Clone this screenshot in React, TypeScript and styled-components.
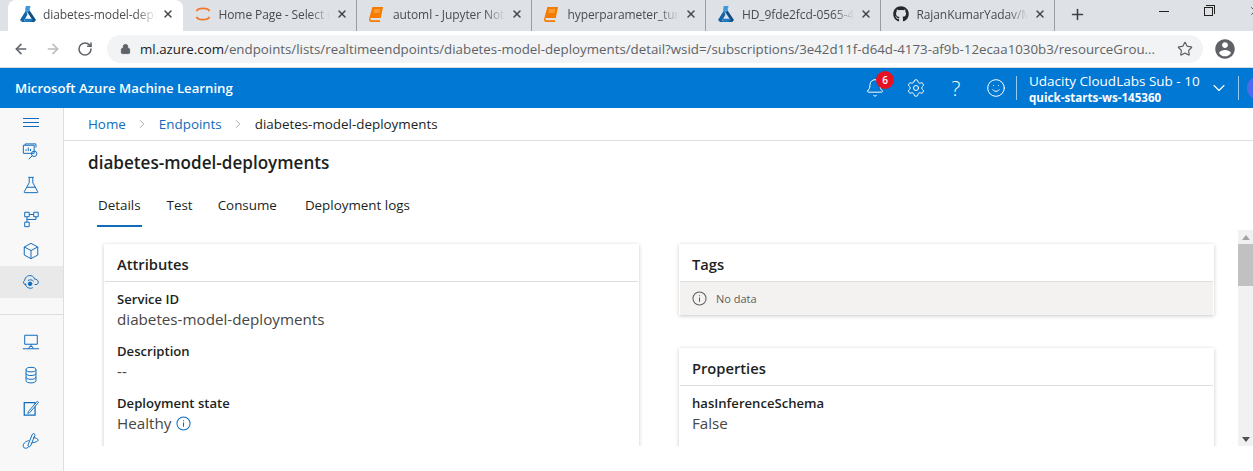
import { ReactNode } from 'react'
import styled, { createGlobalStyle } from 'styled-components'
import { FaGithub } from 'react-icons/fa'
import { IoMdContact } from 'react-icons/io'
import {
  ArrowLeft,
  ArrowRight,
  RotateCw,
  Lock,
  Star,
  X,
  Plus,
  Bell,
  Settings,
  Smile,
  ChevronDown,
  ChevronRight,
} from 'lucide-react'

const font = '"Open Sans", "Noto Sans", "Liberation Sans", sans-serif'

const GlobalStyle = createGlobalStyle`
  html, body {
    margin: 0;
    padding: 0;
    background: #ffffff;
    overflow: hidden;
  }
  * {
    box-sizing: border-box;
  }
`

const FlaskLogo = () => (
  <svg width="16" height="16" viewBox="0 0 17 17">
    <path d="M6 0h5v1.5l-.6.4v3.4L6.7 8.6 5.6 6V1.9L6 1.5z" fill="#3b9ad9" />
    <path d="M5.8 5.5 0 15l2.2 2h5.2l-3-1.6L8 9z" fill="#1565a8" />
    <path d="M10.4 5 17 15l-2 2H9l4-2.4-5-7.6z" fill="#0f4f86" />
    <path d="M4 13.6h8.8l1 1.6-2.8 1.8H6.4z" fill="#1b7cc4" />
  </svg>
)

const SpinnerLogo = () => (
  <svg width="16" height="16" viewBox="0 0 17 17" fill="none" stroke="#f37626" strokeWidth="1.800">
    <path d="M1.5 5.500 C3.5 1.5 13.5 1.5 15.5 5.500" />
    <path d="M1.5 11.500 C3.5 15.5 13.5 15.5 15.5 11.500" />
  </svg>
)

const BookLogo = () => (
  <svg width="14" height="15" viewBox="0 0 14 15">
    <path d="M3.4 0H14l-2.2 11H2.4c-.8 0-1 .5-1 1s.4 1.200 1 1.200h8.800L11 15H2.200C.8 15-.2 13.800 0 12.300z" fill="#f57c00" />
    <path d="M5 3h6M4.600 5h6" stroke="#ffcc80" strokeWidth="0.8" />
  </svg>
)

const InfoIcon = ({ size, color }: { size: number; color: string }) => (
  <svg width={size} height={size} viewBox="0 0 16 16" fill="none" stroke={color} strokeWidth="1.100">
    <circle cx="8" cy="8" r="7" />
    <path d="M8 7v4.500M8 4.500v1.200" />
  </svg>
)

const side = { width: 18, height: 18, viewBox: '0 0 20 20', fill: 'none', stroke: '#0f6cbd', strokeWidth: 1.100 }

const BurgerIcon = () => (
  <svg width="16" height="9" viewBox="0 0 16 9" fill="none" stroke="#0f6cbd" strokeWidth="1">
    <path d="M0 .5h16M0 4.500h16M0 8.500h16" />
  </svg>
)
const DashIcon = () => (
  <svg {...side}>
    <path d="M1.500 2.500h12v9h-12zM3.500 2.500V1h12v4" />
    <path d="M4.500 9V7M7 9V5M9.500 9V6.500" />
    <circle cx="13.500" cy="12" r="3" />
    <path d="M11.300 14.200 7.500 18" />
  </svg>
)
const BeakerIcon = () => (
  <svg {...side}>
    <path d="M7 1.500h6M8 1.500v6L2.500 17.500c-.3.600 0 1 .6 1h13.800c.6 0 .9-.4.600-1L12 7.500v-6" />
    <path d="M5.500 12.500h9" />
  </svg>
)
const PipelineIcon = () => (
  <svg {...side}>
    <path d="M3 2.500h5v5H3zM13 2.500h5v5h-5zM3 13.500h5v5H3z" />
    <path d="M8 5h5M5.500 7.500v6M15.500 7.500v3h-10" />
  </svg>
)
const CubeIcon = () => (
  <svg {...side}>
    <path d="M10 1.500 17.500 5.500v9L10 18.500l-7.500-4v-9z" />
    <path d="M2.500 5.500 10 9.500l7.500-4M10 9.500v9" />
  </svg>
)
const CloudIcon = () => (
  <svg {...side}>
    <path d="M5 13H3.800C1.500 12.500.8 9.500 3 8.200 3.300 4 8 1.500 11.500 3.500c1.300.6 2.200 2 2.500 3.300 4-.3 5.500 4.500 2.500 6H14" />
    <path d="M3.500 11.500c0 4 5 6.800 8.500 4.800" />
    <circle cx="9" cy="12" r="2" fill="#0f6cbd" />
    <path d="M6.500 8.500a4.500 4.500 0 0 1 6.500 1" />
  </svg>
)
const ComputeIcon = () => (
  <svg {...side}>
    <path d="M3 2.500h14v10H3z" />
    <path d="M10 12.500v2.500M1 17.500h18M7.500 17.500l1-2.500h3l1 2.500" />
  </svg>
)
const DatabaseIcon = () => (
  <svg {...side}>
    <ellipse cx="10" cy="4" rx="5.500" ry="2.500" />
    <path d="M4.500 4v12.500c0 1.300 2.500 2.300 5.500 2.300s5.500-1 5.500-2.300V4M4.500 8.300c0 1.300 2.500 2.300 5.500 2.300s5.500-1 5.500-2.300M4.500 12.500c0 1.300 2.500 2.300 5.500 2.300s5.500-1 5.500-2.300" />
  </svg>
)
const NotebookIcon = () => (
  <svg {...side}>
    <path d="M2.500 4h12v14h-12z" strokeWidth="1.400" />
    <path d="M7 14l10-11.500 1.500 1.200L8.500 15.200 6.500 16z" fill="#ffffff" />
  </svg>
)
const LinkedIcon = () => (
  <svg {...side}>
    <path d="M11.500 2.500c1-1.500 3.500-.5 2.800 1.300L9.500 15.500c-.8 1.800-3.500.8-2.800-1.100z" />
    <path d="M7.500 9.500C3.500 10.500.5 13.500 1.500 16.500c.8 2 3.500 2 5.500.5M12.500 6c2.500.5 5.500 1.500 5.500 3s-3.500 2.500-7 3" />
  </svg>
)

const Page = styled.div`
  width: 1253px;
  height: 471px;
  display: flex;
  flex-direction: column;
  overflow: hidden;
  font-family: ${font};
  color: #201f1e;
`

const TabStrip = styled.div`
  height: 31px;
  flex: none;
  display: flex;
  padding-left: 8px;
  background: #dee1e6;
`

const Tab = styled.div<{ $active?: boolean }>`
  width: 174.500px;
  height: 31px;
  flex: none;
  display: flex;
  align-items: center;
  padding: 0 8px 3px 12px;
  background: ${p => (p.$active ? '#ffffff' : 'transparent')};
  border-radius: ${p => (p.$active ? '8px 8px 0 0' : '0')};
  border-right: 1px solid ${p => (p.$active ? 'transparent' : '#9a9da1')};
  svg {
    flex: none;
  }
`

const TabTitle = styled.span<{ $gap: number }>`
  flex: 1;
  min-width: 0;
  margin-left: ${p => p.$gap}px;
  font-size: 12px;
  letter-spacing: -0.1px;
  white-space: nowrap;
  overflow: hidden;
  color: #4a4c4f;
  -webkit-mask-image: linear-gradient(to right, #000 82%, transparent 100%);
  mask-image: linear-gradient(to right, #000 82%, transparent 100%);
`

const TabClose = styled(X)`
  width: 12px;
  height: 12px;
  margin-left: 6px;
  color: #45474a;
  stroke-width: 3;
`

const NewTab = styled(Plus)`
  width: 17px;
  height: 17px;
  margin: 6px 0 0 14px;
  color: #3c4043;
  stroke-width: 2.200;
  flex: none;
`

const WindowControls = styled.div`
  margin-left: auto;
  display: flex;
  align-items: flex-start;
  gap: 35px;
  padding: 4px 0 0;
  margin-right: -9px;
`

const Minimize = styled.div`
  width: 10px;
  height: 1px;
  margin-top: 7px;
  background: #222222;
`

const Restore = styled.div`
  position: relative;
  width: 9px;
  height: 9px;
  margin: 3px 0 0;
  border: 1px solid #222222;
  background: #dee1e6;
  &::before {
    content: '';
    position: absolute;
    left: 1px;
    top: -3px;
    width: 8px;
    height: 8px;
    border: 1px solid #222222;
    border-left: none;
    border-bottom: none;
  }
`

const CloseGlyph = styled(X)`
  width: 14px;
  height: 14px;
  color: #222222;
  stroke-width: 1.200;
`

const Toolbar = styled.div`
  height: 37px;
  flex: none;
  display: flex;
  align-items: center;
  padding: 0 0 0 13px;
  background: #ffffff;
  border-bottom: 1px solid #d5d8dc;
`

const NavButton = styled.span<{ $dim?: boolean }>`
  display: flex;
  width: 32px;
  color: ${p => (p.$dim ? '#b9bcbf' : '#5f6368')};
  svg {
    width: 16px;
    height: 16px;
    stroke-width: 2.300;
  }
`

const Omnibox = styled.div`
  width: 1096px;
  height: 28px;
  margin-left: -2px;
  flex: none;
  display: flex;
  align-items: center;
  padding: 0 10px 0 13px;
  border-radius: 14px;
  background: #f1f3f4;
`

const LockIcon = styled(Lock)`
  width: 11px;
  height: 12px;
  color: #5f6368;
  fill: #5f6368;
  flex: none;
`

const Url = styled.span`
  margin-left: 9px;
  font-size: 13.300px;
  white-space: nowrap;
  color: #5f6368;
  flex: 1;
  min-width: 0;
  overflow: hidden;
  b {
    font-weight: 400;
    color: #202124;
  }
`

const StarIcon = styled(Star)`
  width: 16px;
  height: 16px;
  color: #5f6368;
  stroke-width: 1.800;
  flex: none;
  margin-left: 8px;
`

const Profile = styled(IoMdContact)`
  width: 24px;
  height: 24px;
  margin-left: 10px;
  color: #5f6368;
  flex: none;
`

const AppBar = styled.header`
  height: 40px;
  flex: none;
  display: flex;
  align-items: center;
  padding-left: 15px;
  background: #0078d4;
  color: #ffffff;
`

const Brand = styled.span`
  width: 841px;
  flex: none;
  font-size: 13.200px;
  font-weight: 600;
`

const BarIcon = styled.span`
  position: relative;
  width: 40px;
  flex: none;
  display: flex;
  justify-content: center;
  font-size: 21px;
  font-weight: 300;
  line-height: 20px;
  svg {
    width: 20px;
    height: 20px;
    stroke-width: 1.200;
  }
`

const BellSlot = styled(BarIcon)`
  padding-right: 3px;
`

const Badge = styled.span`
  position: absolute;
  left: 20px;
  top: -7px;
  width: 18px;
  height: 18px;
  border-radius: 50%;
  background: #e81123;
  font-size: 10px;
  font-weight: 600;
  line-height: 18px;
  text-align: center;
`

const BarDivider = styled.span`
  width: 1px;
  height: 24px;
  flex: none;
  background: rgba(255, 255, 255, 0.6);
`

const Subscription = styled.div`
  width: 192px;
  flex: none;
  padding-left: 12px;
  display: flex;
  flex-direction: column;
`

const SubName = styled.span`
  font-size: 13.500px;
  line-height: 18px;
  white-space: nowrap;
`

const WorkspaceName = styled.span`
  font-size: 11.600px;
  font-weight: 700;
  line-height: 15px;
  white-space: nowrap;
`

const Chevron = styled(ChevronDown)`
  width: 20px;
  height: 20px;
  stroke-width: 1.300;
  flex: none;
  margin-right: 9px;
`

const Avatar = styled.span`
  width: 24px;
  height: 24px;
  margin-left: 8px;
  border-radius: 50%;
  flex: none;
  background: #4f6bed;
`

const Body = styled.div`
  flex: 1;
  min-height: 0;
  display: flex;
`

const Sidebar = styled.nav`
  width: 64px;
  flex: none;
  display: flex;
  flex-direction: column;
  background: #f8f8f8;
  border-right: 1px solid #dedede;
`

const SideItem = styled.div<{ $active?: boolean; $h: number }>`
  height: ${p => p.$h}px;
  flex: none;
  display: flex;
  align-items: center;
  justify-content: center;
  padding-right: 2px;
  background: ${p => (p.$active ? '#e9e9e9' : 'transparent')};
`

const SideDivider = styled.div`
  height: 1px;
  flex: none;
  margin: 16px 0 10px;
  background: #dedede;
`

const Main = styled.main`
  flex: 1;
  min-width: 0;
  display: flex;
  flex-direction: column;
`

const Breadcrumb = styled.div`
  height: 33px;
  flex: none;
  display: flex;
  align-items: center;
  padding-left: 24px;
  border-bottom: 1px solid #dedede;
  font-size: 13.400px;
`

const Crumb = styled.span<{ $link?: boolean }>`
  color: ${p => (p.$link ? '#0f6cbd' : '#201f1e')};
`

const CrumbSep = styled(ChevronRight)`
  width: 14px;
  height: 14px;
  margin: 0 10px 0 9px;
  color: #8a8886;
  stroke-width: 1.200;
`

const PageTitle = styled.h1`
  margin: 10px 0 0 24px;
  font-size: 17.100px;
  font-weight: 600;
  line-height: 23px;
  color: #201f1e;
`

const Tabs = styled.div`
  display: flex;
  margin: 19px 0 0 33px;
  height: 34px;
  flex: none;
`

const PageTab = styled.div<{ $active?: boolean; $gap: number }>`
  margin-right: ${p => p.$gap}px;
  padding: 0 1px;
  height: 34px;
  font-size: 13.400px;
  line-height: 24px;
  color: #201f1e;
  border-bottom: 2px solid ${p => (p.$active ? '#0f6cbd' : 'transparent')};
`

const ContentRow = styled.div`
  height: 216px;
  flex: none;
  margin-top: 3px;
  display: flex;
`

const CardGrid = styled.div`
  flex: 1;
  min-width: 0;
  padding: 14px 24px 0 40px;
  overflow: hidden;
  display: grid;
  grid-template-columns: 535px 535px;
  column-gap: 40px;
  align-content: start;
  align-items: start;
`

const Column = styled.div`
  display: flex;
  flex-direction: column;
  gap: 33px;
`

const Card = styled.section`
  background: #ffffff;
  box-shadow: 0 1px 4px rgba(0, 0, 0, 0.22);
  padding: 0 1px;
`

const CardTitle = styled.h2`
  margin: 0;
  padding: 2px 12px 0;
  height: 38px;
  display: flex;
  align-items: center;
  font-size: 14.700px;
  font-weight: 600;
  color: #201f1e;
  border-bottom: 1px solid #dedede;
`

const NoData = styled.div`
  height: 33px;
  display: flex;
  align-items: center;
  gap: 9px;
  padding: 0 12px;
  background: #f3f2f1;
  font-size: 11px;
  color: #605e5c;
`

const Fields = styled.div`
  padding: 8px 12px 30px;
  display: flex;
  flex-direction: column;
  gap: 12px;
`

const Field = styled.div`
  display: flex;
  flex-direction: column;
`

const FieldLabel = styled.span`
  font-size: 13.100px;
  font-weight: 600;
  line-height: 18px;
  color: #201f1e;
`

const FieldValue = styled.span`
  display: flex;
  align-items: center;
  gap: 5px;
  font-size: 15.200px;
  line-height: 22px;
  color: #484644;
`

const Scrollbar = styled.div`
  width: 15px;
  flex: none;
  display: flex;
  flex-direction: column;
  align-items: center;
  background: #f1f1f1;
`

const ScrollArrow = styled.span<{ $down?: boolean }>`
  width: 0;
  height: 0;
  margin: 5px 0 4px;
  border-left: 4px solid transparent;
  border-right: 4px solid transparent;
  ${p => (p.$down ? 'border-top: 5px solid #505050;' : 'border-bottom: 5px solid #a3a3a3;')}
`

const ScrollThumb = styled.div`
  width: 100%;
  height: 42px;
  flex: none;
  background: #c1c1c1;
`

const ScrollTrack = styled.div`
  flex: 1;
`

const tabs: { icon: ReactNode; title: string; gap: number; active?: boolean }[] = [
  { icon: <FlaskLogo />, title: 'diabetes-model-deployments', gap: 7, active: true },
  { icon: <SpinnerLogo />, title: 'Home Page - Select or create a notebook', gap: 8 },
  { icon: <BookLogo />, title: 'automl - Jupyter Notebook', gap: 10 },
  { icon: <BookLogo />, title: 'hyperparameter_tuning - Jupyter', gap: 10 },
  { icon: <FlaskLogo />, title: 'HD_9fde2fcd-0565-4e36-b5a6', gap: 8 },
  { icon: <FaGithub size={16} color="#24292e" />, title: 'RajanKumarYadav/Machine', gap: 8 },
]

const sideTop: { icon: ReactNode; h: number; active?: boolean }[] = [
  { icon: <DashIcon />, h: 30 },
  { icon: <BeakerIcon />, h: 36 },
  { icon: <PipelineIcon />, h: 32 },
  { icon: <CubeIcon />, h: 31 },
  { icon: <CloudIcon />, h: 32, active: true },
]

const sideBottom = [<ComputeIcon key="c" />, <DatabaseIcon key="d" />, <NotebookIcon key="n" />, <LinkedIcon key="l" />]

export default function App() {
  return (
    <Page>
      <GlobalStyle />
      <TabStrip>
        {tabs.map(t => (
          <Tab key={t.title} $active={t.active}>
            {t.icon}
            <TabTitle $gap={t.gap}>{t.title}</TabTitle>
            <TabClose />
          </Tab>
        ))}
        <NewTab />
        <WindowControls>
          <Minimize />
          <Restore />
          <CloseGlyph />
        </WindowControls>
      </TabStrip>

      <Toolbar>
        <NavButton><ArrowLeft /></NavButton>
        <NavButton $dim><ArrowRight /></NavButton>
        <NavButton><RotateCw /></NavButton>
        <Omnibox>
          <LockIcon />
          <Url>
            <b>ml.azure.com</b>/endpoints/lists/realtimeendpoints/diabetes-model-deployments/detail?wsid=/subscriptions/3e42d11f-d64d-4173-af9b-12ecaa1030b3/resourceGrou...
          </Url>
          <StarIcon />
        </Omnibox>
        <Profile />
      </Toolbar>

      <AppBar>
        <Brand>Microsoft Azure Machine Learning</Brand>
        <BellSlot>
          <Bell />
          <Badge>6</Badge>
        </BellSlot>
        <BarIcon><Settings /></BarIcon>
        <BarIcon>?</BarIcon>
        <BarIcon><Smile /></BarIcon>
        <BarDivider />
        <Subscription>
          <SubName>Udacity CloudLabs Sub - 10</SubName>
          <WorkspaceName>quick-starts-ws-145360</WorkspaceName>
        </Subscription>
        <Chevron />
        <BarDivider />
        <Avatar />
      </AppBar>

      <Body>
        <Sidebar>
          <SideItem $h={29}><BurgerIcon /></SideItem>
          {sideTop.map((s, i) => (
            <SideItem key={i} $h={s.h} $active={s.active}>{s.icon}</SideItem>
          ))}
          <SideDivider />
          {sideBottom.map((icon, i) => (
            <SideItem key={i} $h={33}>{icon}</SideItem>
          ))}
        </Sidebar>

        <Main>
          <Breadcrumb>
            <Crumb $link>Home</Crumb>
            <CrumbSep />
            <Crumb $link>Endpoints</Crumb>
            <CrumbSep />
            <Crumb>diabetes-model-deployments</Crumb>
          </Breadcrumb>
          <PageTitle>diabetes-model-deployments</PageTitle>
          <Tabs>
            <PageTab $active $gap={24}>Details</PageTab>
            <PageTab $gap={23}>Test</PageTab>
            <PageTab $gap={26}>Consume</PageTab>
            <PageTab $gap={0}>Deployment logs</PageTab>
          </Tabs>
          <ContentRow>
            <CardGrid>
              <Column>
                <Card>
                  <CardTitle>Attributes</CardTitle>
                  <Fields>
                    <Field>
                      <FieldLabel>Service ID</FieldLabel>
                      <FieldValue>diabetes-model-deployments</FieldValue>
                    </Field>
                    <Field>
                      <FieldLabel>Description</FieldLabel>
                      <FieldValue>--</FieldValue>
                    </Field>
                    <Field>
                      <FieldLabel>Deployment state</FieldLabel>
                      <FieldValue>
                        Healthy <InfoIcon size={15} color="#0f6cbd" />
                      </FieldValue>
                    </Field>
                  </Fields>
                </Card>
              </Column>
              <Column>
                <Card>
                  <CardTitle>Tags</CardTitle>
                  <NoData>
                    <InfoIcon size={15} color="#605e5c" />
                    No data
                  </NoData>
                </Card>
                <Card>
                  <CardTitle>Properties</CardTitle>
                  <Fields>
                    <Field>
                      <FieldLabel>hasInferenceSchema</FieldLabel>
                      <FieldValue>False</FieldValue>
                    </Field>
                  </Fields>
                </Card>
              </Column>
            </CardGrid>
            <Scrollbar>
              <ScrollArrow />
              <ScrollThumb />
              <ScrollTrack />
              <ScrollArrow $down />
            </Scrollbar>
          </ContentRow>
        </Main>
      </Body>
    </Page>
  )
}
